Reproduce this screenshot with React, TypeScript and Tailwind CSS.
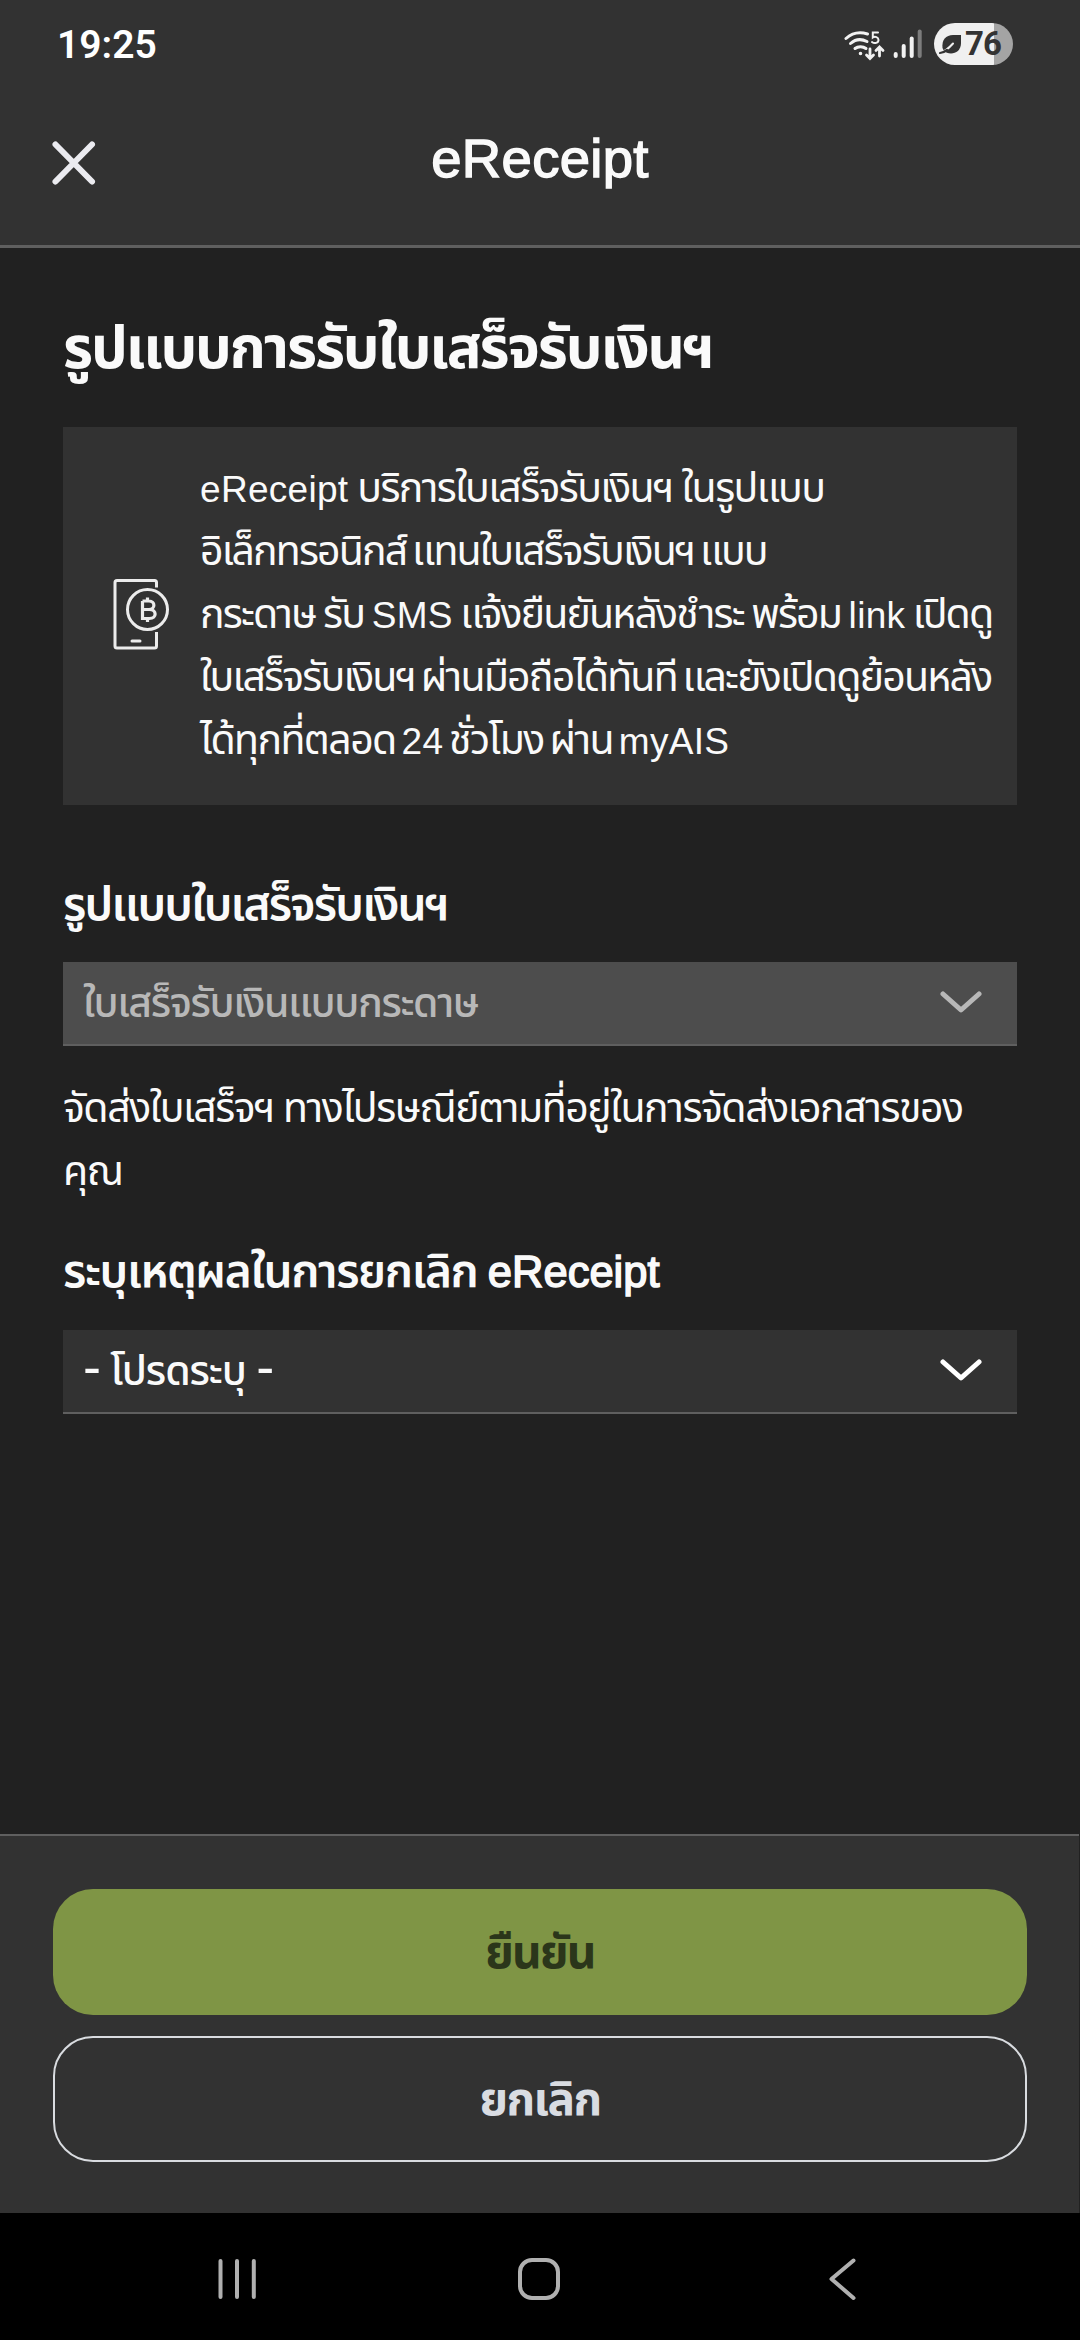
import type { ReactNode } from "react";

const Latin = ({ children }: { children: ReactNode }) => (
  <span className="text-[37px] leading-none tracking-[0.3px]">{children}</span>
);

function Chevron({ className }: { className: string }) {
  return (
    <svg className={className} width="42" height="23" viewBox="0 0 42 23" fill="none" stroke="currentColor" strokeWidth="5" strokeLinecap="round" strokeLinejoin="round">
      <path d="M3 3L21 19L39 3" />
    </svg>
  );
}

function StatusBar() {
  return (
    <div className="flex h-[88px] items-center justify-between pr-[67px] pl-[57px]">
      <span className="font-[Roboto,sans-serif] text-[39px] leading-[88px] font-semibold text-white pt-0.5">19:25</span>
      <div className="flex items-center">
        <svg width="80" height="34" viewBox="0 0 80 34" fill="none" stroke="#f2f2f2" strokeLinecap="round" className="mt-1 mr-[10px]">
          <g strokeWidth="3">
            <path d="M2 9.5C8 4 15 2.500 23.500 5" />
            <path d="M6.500 14.500C11 10.500 17 9.500 23 12.500" />
            <path d="M11 19.500C14 17 19 17 22 19.500" />
            <circle cx="16.500" cy="24.500" r="1" fill="#f2f2f2" strokeWidth="1.600" />
          </g>
          <path d="M34 3.500H28.800V8.500C31 7 34.500 8 34.500 11C34.500 14 30.500 15 28 13" strokeWidth="2" />
          <path d="M26 20V29M22.500 26L26 29.500L29.500 26" strokeWidth="2.800" />
          <path d="M35.500 27V18.500M32 21.500L35.500 18L39 21.500" strokeWidth="2.800" />
          <g strokeWidth="4">
            <path d="M51.700 25V27" />
            <path d="M59.700 17V27" />
            <path d="M67.700 9.500V27" />
            <path d="M75.700 2.500V27" stroke="#7d7d7d" />
          </g>
        </svg>
        <div className="flex h-[42px] w-[79px] items-center rounded-full bg-[linear-gradient(to_right,#f0f0f0_60px,#a4a4a4_60px)] pl-[5px] text-[#333333]">
          <svg width="23" height="21" viewBox="0 0 23 21" className="shrink-0">
            <path d="M22 1V9C22 16 17 19.500 12 19.500C9 19.500 6.500 18.500 5 17L3.500 14C2.500 6 7 1 14 1Z" fill="#333" />
            <path d="M1 18.500C6 18 10 14 14 9.500" fill="none" stroke="#f0f0f0" strokeWidth="2" strokeLinecap="round" />
            <path d="M1 19C4 19 6 17.500 8 16" fill="none" stroke="#333" strokeWidth="2.200" strokeLinecap="round" />
          </svg>
          <span className="ml-[3px] font-[Roboto,sans-serif] text-[33px] leading-[42px] font-bold tracking-[-1px]">76</span>
        </div>
      </div>
    </div>
  );
}

function PhoneBahtIcon() {
  return (
    <svg width="58" height="74" viewBox="0 0 58 74" fill="none" stroke="#ececec" strokeWidth="3">
      <path d="M44.500 10.500V5.500Q44.500 3.500 42.500 3.500H5Q3 3.500 3 5.500V69Q3 71 5 71H42.500Q44.500 71 44.500 69V55" />
      <circle cx="35.500" cy="32.500" r="20" />
      <path d="M20 64H28" strokeLinecap="round" />
      <path d="M30.500 24V41.500H37.500C45 41.500 45 32.500 37.500 32.500H30.500M30.500 24H37C43.500 24 43.500 32.500 37 32.500M35.500 20.500V24M35.500 41.500V45" strokeWidth="3.200" />
    </svg>
  );
}

export default function App() {
  return (
    <div className="flex h-[2340px] w-[1080px] flex-col overflow-hidden bg-[#212121] font-['Liberation_Sans','Noto_Sans_Thai',sans-serif] text-[#fafafa]">
      <header className="h-[248px] border-b-[3px] border-[#5f5f5f] bg-[#323232]">
        <StatusBar />
        <div className="grid h-[150px] grid-cols-[1fr_auto_1fr] items-center px-[51px]">
          <svg width="46" height="46" viewBox="0 0 46 46" stroke="#ebebf0" strokeWidth="6" strokeLinecap="round">
            <path d="M4.500 4.500L41 41.500M41 4.500L4.500 41.500" />
          </svg>
          <h1 className="pb-[9px] text-[54.5px] leading-[120px] font-normal tracking-[0.3px] [-webkit-text-stroke:1.4px_#fafafa]">eReceipt</h1>
        </div>
      </header>

      <main className="flex-1 px-[63px] pt-[60px]">
        <h2 className="text-[58px] leading-[80px] font-bold tracking-[-2.1px] whitespace-nowrap">รูปแบบการรับใบเสร็จรับเงินฯ</h2>

        <section className="mt-[39px] flex h-[378px] bg-[#323232] pt-[30px] pl-[49px]">
          <div className="mt-[120px] w-[88px] shrink-0">
            <PhoneBahtIcon />
          </div>
          <div className="text-[41px] leading-[63px] whitespace-nowrap">
            <p className="tracking-[-1.6px] [word-spacing:-1px]">
              <Latin>eReceipt</Latin> บริการใบเสร็จรับเงินฯ ในรูปแบบ
            </p>
            <p className="tracking-[-1.85px] [word-spacing:-4px]">อิเล็กทรอนิกส์ แทนใบเสร็จรับเงินฯ แบบ</p>
            <p className="tracking-[-1.85px] [word-spacing:-2px]">
              กระดาษ รับ <Latin>SMS</Latin> แจ้งยืนยันหลังชำระ พร้อม <Latin>link</Latin> เปิดดู
            </p>
            <p className="tracking-[-1.8px] [word-spacing:-4px]">ใบเสร็จรับเงินฯ ผ่านมือถือได้ทันที และยังเปิดดูย้อนหลัง</p>
            <p className="tracking-[-1.6px] [word-spacing:-4px]">
              ได้ทุกที่ตลอด <Latin>24</Latin> ชั่วโมง ผ่าน <Latin>myAIS</Latin>
            </p>
          </div>
        </section>

        <h3 className="mt-[69px] text-[46px] leading-[60px] font-semibold tracking-[-1.8px]">รูปแบบใบเสร็จรับเงินฯ</h3>
        <div className="mt-7 flex h-[84px] items-start justify-between border-b-2 border-[#5f5f5f] bg-[#4d4d4d] pr-[35px] pl-[20px] text-[#b8b8b8]">
          <span className="text-[41px] leading-[82px] font-medium tracking-[-1.4px]">ใบเสร็จรับเงินแบบกระดาษ</span>
          <Chevron className="mt-[29px]" />
        </div>
        <p className="mt-[31px] text-[41px] leading-[63px] tracking-[-1.45px] whitespace-nowrap [word-spacing:-1px]">
          จัดส่งใบเสร็จฯ ทางไปรษณีย์ตามที่อยู่ในการจัดส่งเอกสารของ
          <br />
          คุณ
        </p>

        <h3 className="mt-[38px] text-[46px] leading-[60px] font-semibold tracking-[-1.4px] whitespace-nowrap [word-spacing:-1px]">
          ระบุเหตุผลในการยกเลิก{" "}
          <span className="text-[43.5px] leading-none font-normal tracking-normal [-webkit-text-stroke:1.5px_#fafafa]">eReceipt</span>
        </h3>
        <div className="mt-[29px] flex h-[84px] items-start justify-between border-b-2 border-[#5f5f5f] bg-[#323232] pr-[35px] pl-[20px]">
          <span className="text-[41px] leading-[82px] font-medium tracking-[-1.1px]">
            <span className="text-[54px] leading-none font-normal">-</span> โปรดระบุ{" "}
            <span className="text-[54px] leading-none font-normal">-</span>
          </span>
          <Chevron className="mt-[29px] text-white" />
        </div>
      </main>

      <footer className="mr-px flex h-[379px] flex-col gap-[21px] border-t-2 border-[#5f5f5f] bg-[#323232] pt-[53px] pr-[52px] pl-[53px]">
        <button className="h-[126px] rounded-[40px] bg-[#7f9545] text-[46px] leading-[126px] font-bold tracking-[-1.8px] text-[#2b361a]">ยืนยัน</button>
        <button className="h-[126px] rounded-[40px] border-2 border-[#d9dce0] text-[46px] leading-[122px] font-bold tracking-[-1.6px] text-[#d9dce2]">ยกเลิก</button>
      </footer>

      <nav className="flex h-[127px] items-center bg-black pt-[4px] pl-[217px]">
        <svg width="40" height="42" viewBox="0 0 40 42" stroke="#b0b0b0" strokeWidth="4" strokeLinecap="round">
          <path d="M3.500 3V39M20 3V39M36.800 3V39" />
        </svg>
        <svg width="44" height="44" viewBox="0 0 44 44" className="ml-[260px]" fill="none" stroke="#b0b0b0" strokeWidth="4">
          <rect x="3" y="3" width="38" height="38" rx="12" />
        </svg>
        <svg width="30" height="44" viewBox="0 0 30 44" className="ml-[267px]" fill="none" stroke="#b0b0b0" strokeWidth="4" strokeLinecap="round" strokeLinejoin="round">
          <path d="M25.500 3.500L3.500 22L25.500 41" />
        </svg>
      </nav>
    </div>
  );
}
